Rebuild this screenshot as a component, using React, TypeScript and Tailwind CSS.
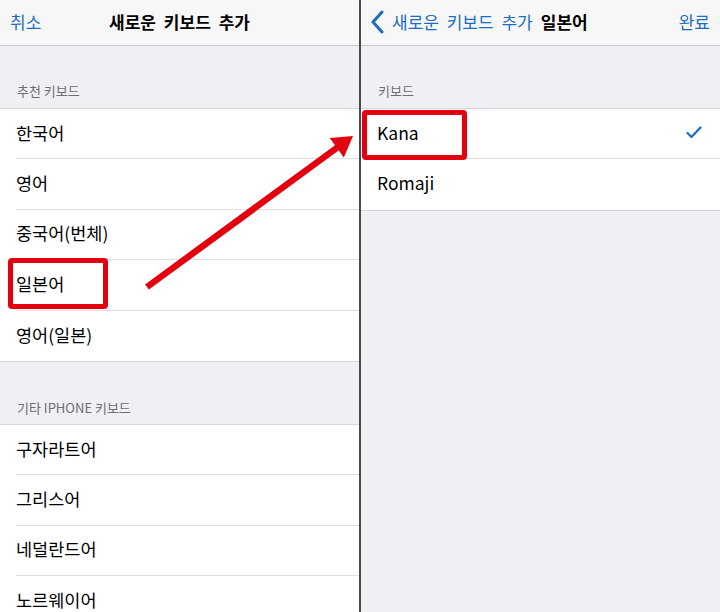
import React from "react";

const FONT = '"Noto Sans CJK KR", "Noto Sans", "Liberation Sans", sans-serif';

function Row({ label, last, check }: { label: string; last?: boolean; check?: boolean }) {
  return (
    <div className="h-[50.4px] shrink-0 pl-4 bg-white">
      <div
        className={
          "h-full flex items-center justify-between pr-[18px] pb-[2px] text-[17.5px] text-black " +
          (last ? "" : "border-b border-[#dedede]")
        }
      >
        <span>{label}</span>
        {check && (
          <svg width="16" height="13" viewBox="0 0 16 13">
            <polyline points="1.5,7 5.5,11 14.5,1.5" fill="none" stroke="#1a6dc2" strokeWidth="2.2" strokeLinecap="round" strokeLinejoin="round" />
          </svg>
        )}
      </div>
    </div>
  );
}

function Header({ text, h, pb }: { text: string; h: string; pb: string }) {
  return (
    <div className={`${h} ${pb} shrink-0 flex items-end pl-[17px] text-[13px] leading-[18px] text-[#6d6d72]`}>{text}</div>
  );
}

export default function App() {
  return (
    <div className="relative w-[720px] h-[612px] overflow-hidden flex bg-[#efeff4]" style={{ fontFamily: FONT }}>
      {/* Left panel */}
      <div className="w-[359px] shrink-0 flex flex-col">
        <div className="h-[46px] shrink-0 bg-[#f7f7f7] border-b border-[#c8c7cc] relative flex items-center pb-[2px]">
          <span className="pl-[10px] text-[17px] text-[#1a6dc2]">취소</span>
          <span className="absolute left-0 right-0 text-center text-[17px] font-bold text-black [word-spacing:4px] pointer-events-none">
            새로운 키보드 추가
          </span>
        </div>
        <Header text="추천 키보드" h="h-[62px]" pb="pb-[8px]" />
        <div className="shrink-0 border-y border-[#d6d6d6]">
          <Row label="한국어" />
          <Row label="영어" />
          <Row label="중국어(번체)" />
          <Row label="일본어" />
          <Row label="영어(일본)" last />
        </div>
        <Header text="기타 IPHONE 키보드" h="h-[62px]" pb="pb-[7px]" />
        <div className="shrink-0 border-t border-[#d6d6d6]">
          <Row label="구자라트어" />
          <Row label="그리스어" />
          <Row label="네덜란드어" />
          <Row label="노르웨이어" />
        </div>
      </div>

      {/* Divider */}
      <div className="w-[2px] bg-[#4a4a4a] shrink-0" />

      {/* Right panel */}
      <div className="flex-1 flex flex-col">
        <div className="h-[46px] shrink-0 bg-[#f7f7f7] border-b border-[#c8c7cc] flex items-center justify-between pr-[10px] pb-[2px]">
          <div className="flex items-center pl-[9px]">
            <svg width="14" height="24" viewBox="0 0 14 24" className="mr-[8px]">
              <polyline points="12,2 3,12 12,22" fill="none" stroke="#1a6dc2" strokeWidth="3" strokeLinecap="round" strokeLinejoin="round" />
            </svg>
            <span className="text-[17px] text-[#1a6dc2] [word-spacing:4px]">새로운 키보드 추가</span>
            <span className="ml-[8px] text-[17px] font-bold text-black">일본어</span>
          </div>
          <span className="text-[17px] text-[#1a6dc2]">완료</span>
        </div>
        <Header text="키보드" h="h-[62px]" pb="pb-[8px]" />
        <div className="shrink-0 border-y border-[#d6d6d6]">
          <Row label="Kana" check />
          <Row label="Romaji" last />
        </div>
      </div>

      {/* Annotations */}
      <div className="absolute left-[8px] top-[258px] w-[100px] h-[51px] border-[5px] border-[#e3000f] rounded-[4px] pointer-events-none" />
      <div className="absolute left-[362px] top-[110px] w-[105px] h-[50px] border-[5px] border-[#e3000f] rounded-[4px] pointer-events-none" />
      <svg className="absolute left-0 top-0 pointer-events-none" width="720" height="612" viewBox="0 0 720 612">
        <line x1="147" y1="287" x2="338" y2="147" stroke="#e3000f" strokeWidth="6.5" />
        <polygon points="353,136 329.8,138 343.8,157.4" fill="#e3000f" />
      </svg>
    </div>
  );
}
